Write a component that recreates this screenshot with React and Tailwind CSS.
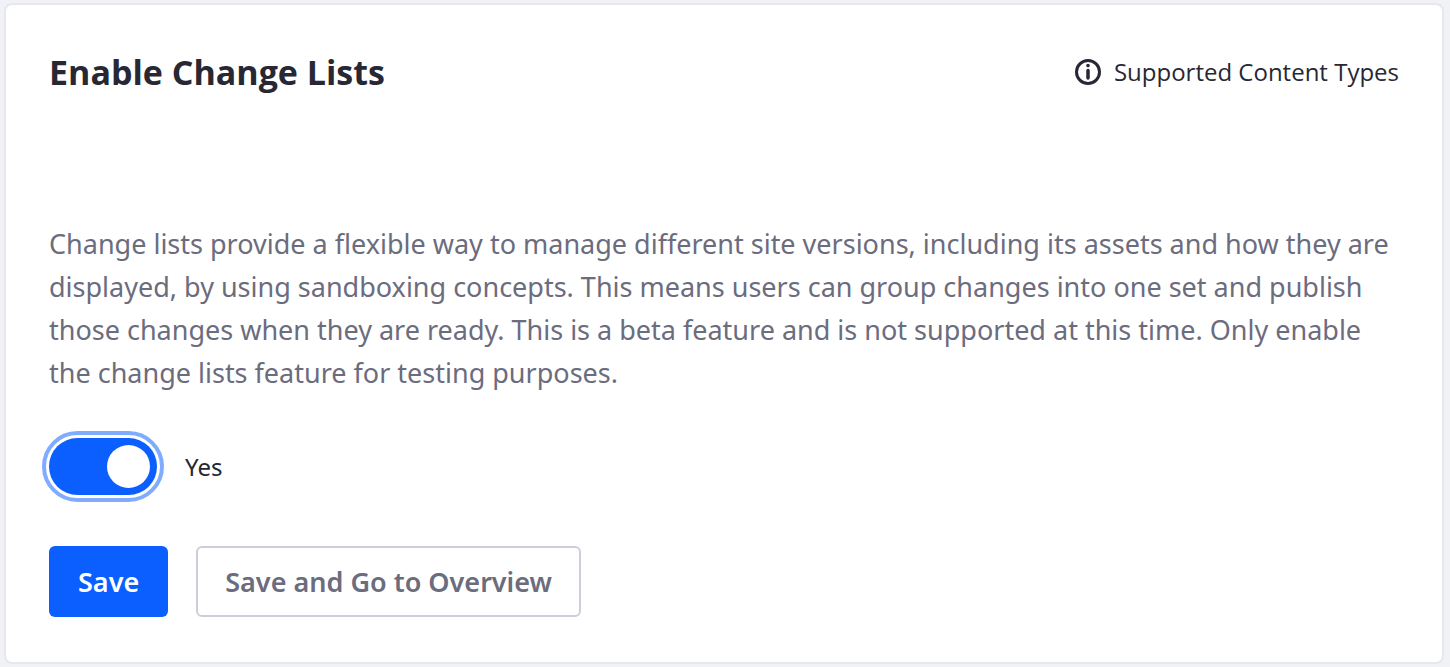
import React, { useState } from "react";

export default function App() {
  const [enabled, setEnabled] = useState(true);
  return (
    <main className="min-h-screen bg-[#f1f2f5] pt-[3px] pr-1.5 pb-[3px] pl-1 font-['Noto_Sans','Open_Sans',sans-serif] text-[#272833]">
      <section className="rounded-lg border-2 border-[#e7e7ed] bg-white px-[43px] pt-10 pb-[45px]">
        <header className="flex items-center justify-between">
          <h1 className="font-['Open_Sans',sans-serif] text-[34px] leading-[54px] font-bold">Enable Change Lists</h1>
          <a href="#types" className="flex items-center gap-3 font-['Open_Sans',sans-serif] text-[24px]">
            <svg viewBox="0 0 28 28" className="size-7" fill="none" stroke="currentColor" aria-hidden="true">
              <circle cx="14" cy="14" r="11.5" strokeWidth="3" />
              <circle cx="14" cy="7.6" r="1.8" fill="currentColor" stroke="none" />
              <path d="M14 12.4v7.6" strokeWidth="3.5" strokeLinecap="round" />
            </svg>
            Supported Content Types
          </a>
        </header>
        <p className="mt-[123px] text-[27px] leading-[43px] text-[#6b6c7e]">
          Change lists provide a flexible way to manage different site versions, including its assets and how they are displayed, by using sandboxing concepts. This means users can group changes into one set and publish those changes when they are ready. This is a beta feature and is not supported at this time. Only enable the change lists feature for testing purposes.
        </p>
        <label className="mt-11 flex w-fit items-center gap-7 text-[24px]">
          <input type="checkbox" role="switch" checked={enabled} onChange={() => setEnabled(!enabled)} className="sr-only" />
          <span className={enabled ? "flex h-[57px] w-[108px] justify-end rounded-full bg-[#0b5fff] p-[7px] outline-4 outline-offset-3 outline-[#80acff]" : "flex h-[57px] w-[108px] rounded-full bg-[#a7a9bc] p-[7px] outline-4 outline-offset-3 outline-[#80acff]"}>
            <span className="size-[43px] rounded-full bg-white" />
          </span>
          {enabled ? "Yes" : "No"}
        </label>
        <div className="mt-[51px] flex gap-7 text-[27px] font-semibold">
          <button className="h-[71px] rounded-md bg-[#0b5fff] px-[29px] pt-0.5 text-white">Save</button>
          <button className="h-[71px] rounded-md border-2 border-[#cdced9] px-[27px] pt-0.5 text-[#6b6c7e]">Save and Go to Overview</button>
        </div>
      </section>
    </main>
  );
}
